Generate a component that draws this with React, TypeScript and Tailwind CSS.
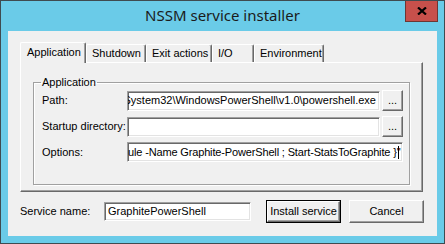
const sunken =
  "bg-white border border-t-[#a0a0a0] border-l-[#a0a0a0] border-b-white border-r-white shadow-[inset_1px_1px_0_#696969,inset_-1px_-1px_0_#e3e3e3]";

const raised =
  "bg-[#f0f0f0] border border-t-white border-l-white border-b-[#696969] border-r-[#696969] shadow-[inset_-1px_-1px_0_#a0a0a0]";

type TabProps = { label: string; width: string; active?: boolean };

const Tab = ({ label, width, active }: TabProps) => {
  if (active) {
    return (
      <div
        className={`${width} h-[21px] -mb-[1px] z-10 bg-[#f0f0f0] border-t border-l border-r border-t-white border-l-white border-r-[#696969] rounded-t-[2px] shadow-[inset_-1px_0_0_#a0a0a0] pl-[6px] pt-[3px]`}
      >
        {label}
      </div>
    );
  }
  return (
    <div
      className={`${width} h-[18px] bg-[#f0f0f0] border-t border-l border-r border-t-white border-l-white border-r-[#696969] rounded-t-[2px] shadow-[inset_-1px_0_0_#a0a0a0] pl-[5px] pt-[2px]`}
    >
      {label}
    </div>
  );
};

const Field = ({ text, caret, width, tight }: { text: string; caret?: boolean; width: string; tight?: boolean }) => (
  <div
    className={`${sunken} ${width} h-[20px] flex items-center justify-end overflow-hidden whitespace-nowrap pr-[3px] ${
      tight ? "tracking-[-0.15px]" : ""
    }`}
  >
    <span>{text}</span>
    {caret && <span className="w-[1px] h-[13px] bg-black -ml-[2px]" />}
  </div>
);

const Browse = () => (
  <button className={`${raised} w-[21px] h-[21px] ml-[2px] flex items-center justify-center leading-none pb-[1px] text-[11px]`}>
    ...
  </button>
);

export default function App() {
  return (
    <div className="w-[445px] h-[244px] bg-[#6acbe8] border border-[#3f4b50] flex flex-col text-[11px] leading-[13px] text-black font-['Liberation_Sans',Arial,sans-serif]">
      <div className="relative h-[30px] flex items-center justify-center">
        <span className="font-['Noto_Sans',sans-serif] text-[15px] text-[#1b1b1b] -mt-[1px]">NSSM service installer</span>
        <div className="absolute top-0 right-[6px] w-[33px] h-[21px] bg-[#c7504b] border border-t-0 border-[#6d3633] flex items-center justify-center">
          <svg width="10" height="8" viewBox="0 0 10 8">
            <path d="M1 0.5 L9 7.5 M9 0.5 L1 7.5" stroke="#000" strokeWidth="2.2" />
          </svg>
        </div>
      </div>

      <div className="mx-[7px] h-[205px] bg-[#f0f0f0] flex flex-col">
        <div className="flex items-end pl-[12px] pt-[11px]">
          <Tab label="Application" width="w-[66px]" active />
          <Tab label="Shutdown" width="w-[60px]" />
          <Tab label="Exit actions" width="w-[66px]" />
          <Tab label="I/O" width="w-[42px]" />
          <Tab label="Environment" width="w-[70px]" />
        </div>

        <div className={`${raised} ml-[12px] w-[403px] h-[130px] px-[12px] pt-[13px] pb-[6px] flex`}>
          <fieldset className="flex-1 border border-[#a0a0a0] shadow-[inset_1px_1px_0_#fff,1px_1px_0_#fff] pl-[8px] pr-[5px] pb-[4px] pt-[1px] m-0 min-w-0">
            <legend className="-ml-[1px] px-[1px] leading-[13px]">Application</legend>
            <div className="flex flex-col gap-[5px]">
              <div className="flex items-center">
                <span className="w-[85px]">Path:</span>
                <Field width="w-[253px]" text="System32\WindowsPowerShell\v1.0\powershell.exe" />
                <Browse />
              </div>
              <div className="flex items-center">
                <span className="w-[85px]">Startup directory:</span>
                <Field width="w-[253px]" text="" />
                <Browse />
              </div>
              <div className="flex items-center">
                <span className="w-[85px]">Options:</span>
                <Field width="w-[276px]" caret tight text={'ule -Name Graphite-PowerShell ; Start-StatsToGraphite }"'} />
              </div>
            </div>
          </fieldset>
        </div>

        <div className="flex items-center pl-[12px] mt-[8px]">
          <span className="w-[84px]">Service name:</span>
          <div className={`${sunken} w-[147px] h-[19px] flex items-center pl-[3px]`}>GraphitePowerShell</div>
          <button className="ml-[15px] w-[75px] h-[23px] border border-black bg-[#f0f0f0] flex">
            <span className="flex-1 flex items-center justify-center border border-t-white border-l-white border-b-[#696969] border-r-[#696969] shadow-[inset_-1px_-1px_0_#a0a0a0]">
              Install service
            </span>
          </button>
          <button className={`${raised} ml-[8px] w-[75px] h-[23px] flex items-center justify-center`}>Cancel</button>
        </div>
      </div>
    </div>
  );
}
